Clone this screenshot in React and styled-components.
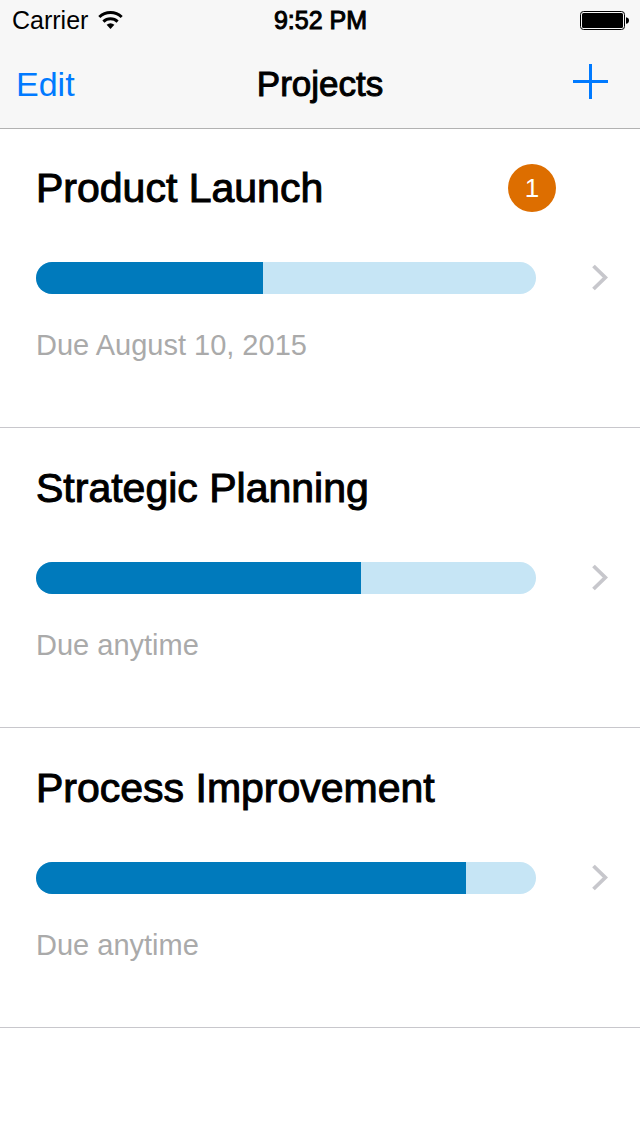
import React from 'react';
import styled, { createGlobalStyle } from 'styled-components';

const GlobalStyle = createGlobalStyle`
  * {
    box-sizing: border-box;
  }

  body {
    margin: 0;
    background: #ffffff;
    color: #000000;
    font-family: "Liberation Sans", Arial, Helvetica, sans-serif;
  }
`;

const Header = styled.header`
  position: relative;
  background: #f7f7f7;
  box-shadow: 0 1px 0 #b2b2b2;
`;

const StatusBar = styled.div`
  display: grid;
  grid-template-columns: 1fr auto 1fr;
  align-items: center;
  height: 40px;
  padding: 0 11px 0 12px;
  font-size: 25px;
  line-height: 40px;
`;

const Carrier = styled.div`
  display: flex;
  align-items: center;
  gap: 10px;
`;

const Clock = styled.time`
  -webkit-text-stroke: 1px currentColor;
`;

const Battery = styled.svg`
  justify-self: end;
`;

const NavBar = styled.nav`
  display: grid;
  grid-template-columns: 1fr auto 1fr;
  align-items: center;
  height: 88px;
  padding: 0 32px 0 16px;
`;

const NavButton = styled.button`
  display: flex;
  justify-self: ${({ $end }) => ($end ? 'end' : 'start')};
  padding: 0;
  border: 0;
  background: none;
  color: #007aff;
  font-family: inherit;
  font-size: 34px;
  line-height: 40px;
  cursor: pointer;
`;

const NavTitle = styled.h1`
  margin: 0;
  padding-left: 16px;
  font-size: 35px;
  font-weight: 400;
  line-height: 40px;
  -webkit-text-stroke: 1px currentColor;
`;

const List = styled.ul`
  margin: 0;
  padding: 0;
  list-style: none;
`;

const Row = styled.a`
  display: flex;
  align-items: center;
  gap: 36px;
  padding: 36px 32px 65px 36px;
  border-bottom: 1px solid #c8c7cc;
  color: inherit;
  text-decoration: none;
`;

const Details = styled.div`
  flex: 1;
`;

const TitleLine = styled.div`
  display: flex;
  align-items: center;
  justify-content: space-between;
`;

const Title = styled.h2`
  margin: 0;
  font-size: 41px;
  font-weight: 400;
  line-height: 48px;
  -webkit-text-stroke: 1px currentColor;
`;

const Badge = styled.span`
  width: 48px;
  height: 48px;
  border-radius: 50%;
  background: #dd6e00;
  color: #ffffff;
  font-size: 26px;
  line-height: 48px;
  text-align: center;
`;

const Track = styled.div`
  height: 32px;
  margin: 50px 20px 34px 0;
  border-radius: 16px;
  background: #c6e5f5;
  overflow: hidden;
`;

const Fill = styled.div`
  height: 100%;
  background: #007abc;
`;

const Due = styled.p`
  margin: 0;
  color: #aaaaaa;
  font-size: 29px;
  line-height: 34px;
`;

const Chevron = styled.svg`
  flex: none;
  margin-top: 28px;
`;

const projects = [
  { id: 'launch', name: 'Product Launch', progress: 45.4, due: 'Due August 10, 2015', alerts: 1 },
  { id: 'planning', name: 'Strategic Planning', progress: 65, due: 'Due anytime' },
  { id: 'improvement', name: 'Process Improvement', progress: 86, due: 'Due anytime' },
];

const WifiIcon = () => (
  <svg width="25" height="18" viewBox="0 0 25 18" fill="none" stroke="#000" strokeWidth="3" aria-hidden="true">
    <path d="M1.3 6A16.3 16.3 0 0 1 23.7 6" />
    <path d="M5.4 10.6A10.3 10.3 0 0 1 19.6 10.6" />
    <path d="M8.6 13.8A6 6 0 0 1 16.4 13.8L12.5 18Z" fill="#000" stroke="none" />
  </svg>
);

const BatteryIcon = () => (
  <Battery width="49" height="19" viewBox="0 0 49 19" aria-hidden="true">
    <rect x="0.5" y="0.5" width="44" height="18" rx="3" fill="none" stroke="#000" />
    <rect x="2" y="2" width="41" height="15" rx="1.5" />
    <path d="M46 6.2C48 6.5 49 7.6 49 9.5S48 12.5 46 12.8Z" />
  </Battery>
);

const Project = ({ project }) => (
  <li>
    <Row href={`#${project.id}`}>
      <Details>
        <TitleLine>
          <Title>{project.name}</Title>
          {project.alerts && <Badge>{project.alerts}</Badge>}
        </TitleLine>
        <Track
          role="progressbar"
          aria-label={project.name}
          aria-valuenow={project.progress}
          aria-valuemin={0}
          aria-valuemax={100}
        >
          <Fill style={{ width: `${project.progress}%` }} />
        </Track>
        <Due>{project.due}</Due>
      </Details>
      <Chevron width="16" height="27" viewBox="0 0 16 27" fill="none" stroke="#c7c7cc" strokeWidth="3.8" aria-hidden="true">
        <path d="M1.5 2L13.3 13.5L1.5 25" />
      </Chevron>
    </Row>
  </li>
);

const App = () => {
  return (
    <>
      <GlobalStyle />
      <Header>
        <StatusBar>
          <Carrier>
            <span>Carrier</span>
            <WifiIcon />
          </Carrier>
          <Clock>9:52 PM</Clock>
          <BatteryIcon />
        </StatusBar>
        <NavBar>
          <NavButton type="button">Edit</NavButton>
          <NavTitle>Projects</NavTitle>
          <NavButton type="button" $end aria-label="Add project">
            <svg width="35" height="40" viewBox="0 0 35 40" fill="#007aff" aria-hidden="true">
              <path d="M16 0h3v16h16v3H19v16h-3V19H0v-3h16z" />
            </svg>
          </NavButton>
        </NavBar>
      </Header>
      <main>
        <List>
          {projects.map((project) => (
            <Project key={project.id} project={project} />
          ))}
        </List>
      </main>
    </>
  );
};

export default App;
